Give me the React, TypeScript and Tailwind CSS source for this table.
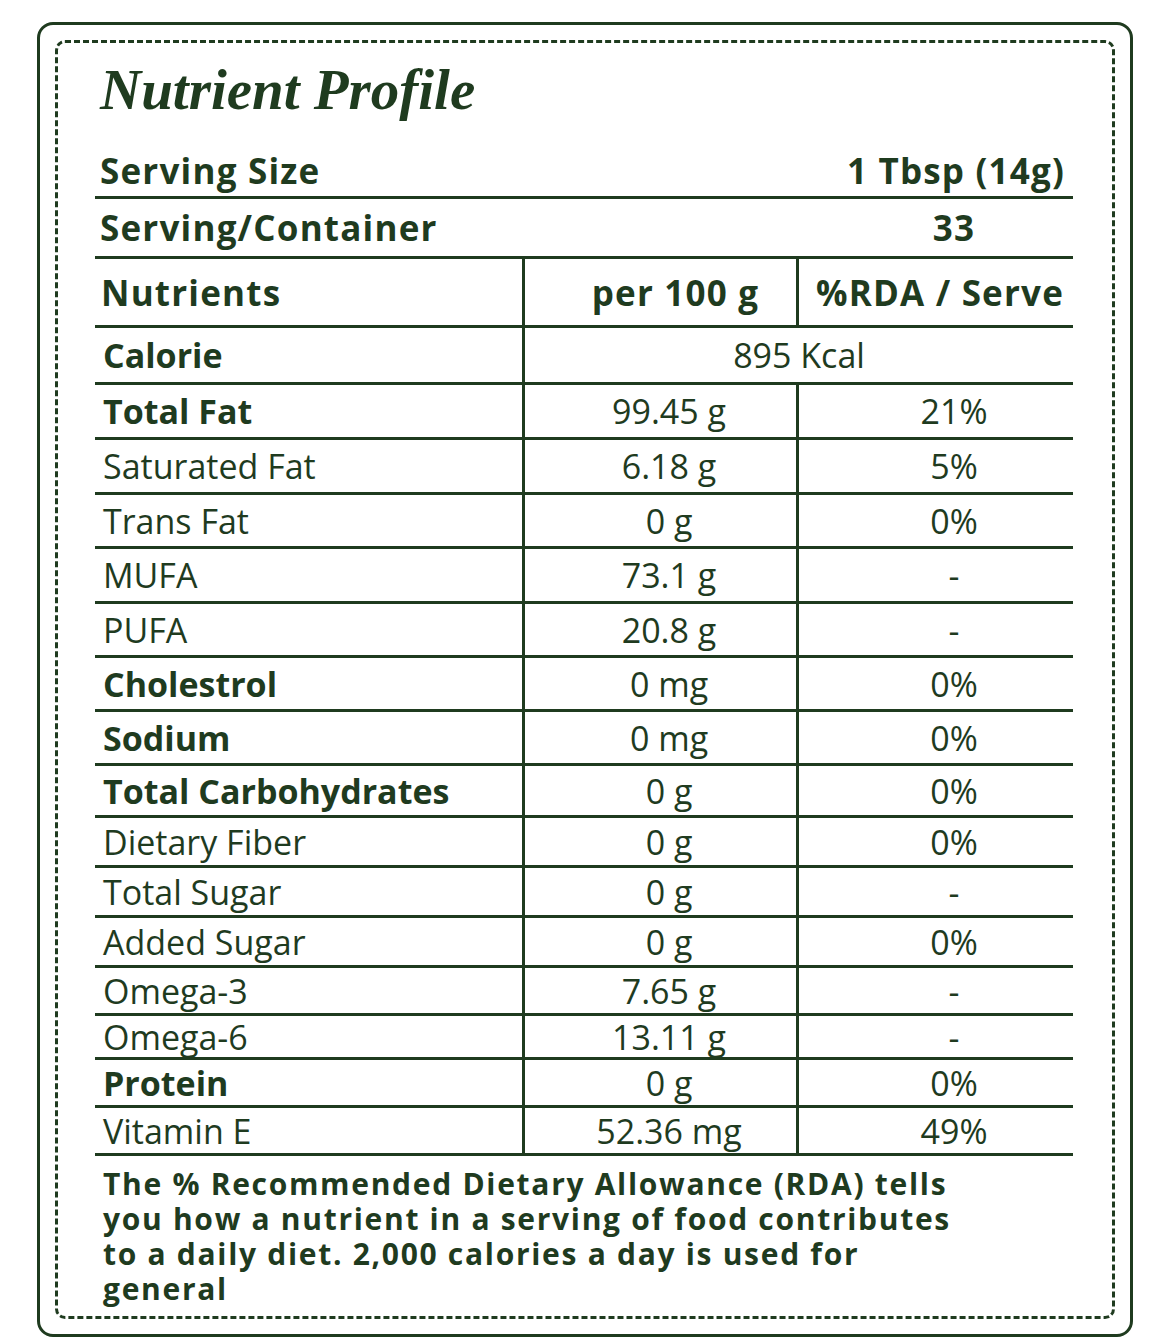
import React from 'react';

type Row = {
  name: string;
  bold?: boolean;
  per: string;
  rda?: string;
  h: string;
};

const rows: Row[] = [
  { name: 'Calorie', bold: true, per: '895 Kcal', h: 'h-[57px]' },
  { name: 'Total Fat', bold: true, per: '99.45 g', rda: '21%', h: 'h-[55px]' },
  { name: 'Saturated Fat', per: '6.18 g', rda: '5%', h: 'h-[55px]' },
  { name: 'Trans Fat', per: '0 g', rda: '0%', h: 'h-[54px]' },
  { name: 'MUFA', per: '73.1 g', rda: '-', h: 'h-[55px]' },
  { name: 'PUFA', per: '20.8 g', rda: '-', h: 'h-[54px]' },
  { name: 'Cholestrol', bold: true, per: '0 mg', rda: '0%', h: 'h-[54px]' },
  { name: 'Sodium', bold: true, per: '0 mg', rda: '0%', h: 'h-[54px]' },
  { name: 'Total Carbohydrates', bold: true, per: '0 g', rda: '0%', h: 'h-[52px]' },
  { name: 'Dietary Fiber', per: '0 g', rda: '0%', h: 'h-[50px]' },
  { name: 'Total Sugar', per: '0 g', rda: '-', h: 'h-[50px]' },
  { name: 'Added Sugar', per: '0 g', rda: '0%', h: 'h-[50px]' },
  { name: 'Omega-3', per: '7.65 g', rda: '-', h: 'h-[48px]' },
  { name: 'Omega-6', per: '13.11 g', rda: '-', h: 'h-[44px]' },
  { name: 'Protein', bold: true, per: '0 g', rda: '0%', h: 'h-[48px]' },
  { name: 'Vitamin E', per: '52.36 mg', rda: '49%', h: 'h-[48px]' },
];

const NutrientRow: React.FC<{ row: Row }> = ({ row }) => (
  <div className={`grid grid-cols-[430px_274px_1fr] border-b-[3px] border-[#1f3b1f] text-[34px] leading-none ${row.h}`}>
    <div
      className={`flex items-center pl-[8px] border-r-[3px] border-[#1f3b1f] ${row.bold ? 'font-bold' : 'font-normal'}`}
    >
      {row.name}
    </div>
    {row.rda === undefined ? (
      <div className="col-span-2 flex items-center justify-center">{row.per}</div>
    ) : (
      <>
        <div className="flex items-center justify-center pl-[17px] border-r-[3px] border-[#1f3b1f]">{row.per}</div>
        <div className="flex items-center justify-center pl-[36px]">{row.rda}</div>
      </>
    )}
  </div>
);

export default function App() {
  return (
    <div className="min-h-screen bg-white pl-[37px] pt-[22px] text-[#1f3b1f] font-['Open_Sans',sans-serif]">
      <div className="w-[1096px] h-[1315px] border-[3px] border-[#1f3b1f] rounded-[16px] p-[15px]">
        <div className="h-full border-[3px] border-dashed border-[#1f3b1f] rounded-[10px] pl-[37px] pr-[39px] pt-[18px]">
          <h1 className="ml-[5px] font-['Liberation_Serif',serif] italic font-bold text-[57px] leading-none">
            Nutrient Profile
          </h1>

          <div className="mt-[26px] text-[35px] leading-none font-bold tracking-[1.2px]">
            <div className="flex items-center justify-between h-[55px] border-b-[3px] border-[#1f3b1f] pl-[5px] pr-[8px]">
              <span>Serving Size</span>
              <span>1 Tbsp (14g)</span>
            </div>
            <div className="grid grid-cols-[430px_274px_1fr] h-[60px] border-b-[3px] border-[#1f3b1f]">
              <div className="col-span-2 flex items-center pl-[5px]">Serving/Container</div>
              <div className="flex items-center justify-center pl-[36px]">33</div>
            </div>
            <div className="grid grid-cols-[430px_274px_1fr] h-[69px] border-b-[3px] border-[#1f3b1f]">
              <div className="flex items-center pl-[6px] border-r-[3px] border-[#1f3b1f]">Nutrients</div>
              <div className="flex items-center justify-center pl-[30px] border-r-[3px] border-[#1f3b1f]">per 100 g</div>
              <div className="flex items-center justify-center pl-[8px]">%RDA / Serve</div>
            </div>
          </div>

          <div className="tracking-normal">
            {rows.map((row) => (
              <NutrientRow key={row.name} row={row} />
            ))}
          </div>

          <p className="pt-[10px] pl-[8px] max-w-[878px] text-[30px] leading-[35px] font-bold tracking-[1.7px]">
            The % Recommended Dietary Allowance (RDA) tells you how a nutrient in a serving of food contributes to a
            daily diet. 2,000 calories a day is used for general
          </p>
        </div>
      </div>
    </div>
  );
}
